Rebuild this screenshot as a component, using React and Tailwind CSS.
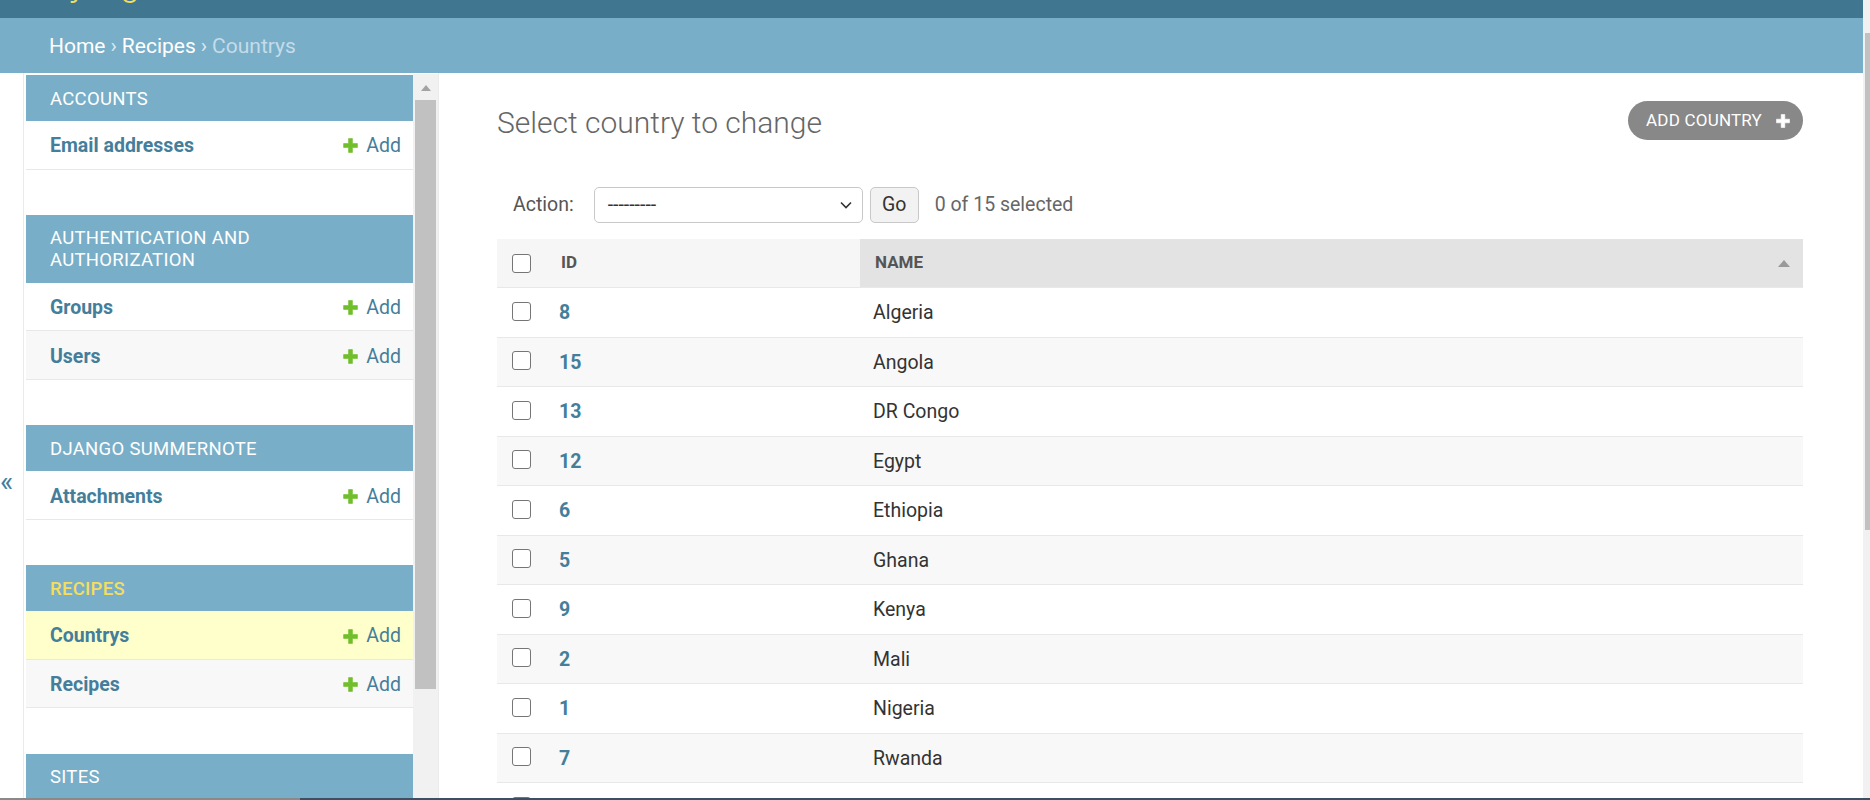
import React from "react";

const PlusIcon = ({ className, color }) => (
  <svg viewBox="0 0 16 16" className={className}>
    <path
      d="M6.2 1.5h3.6v4.7h4.7v3.6H9.8v4.7H6.2V9.8H1.5V6.2h4.7z"
      fill={color}
      stroke={color}
      strokeWidth="0.6"
      strokeLinejoin="round"
    />
  </svg>
);

const modules = [
  { name: ["ACCOUNTS"], rows: ["Email addresses"] },
  { name: ["AUTHENTICATION AND", "AUTHORIZATION"], rows: ["Groups", "Users"] },
  { name: ["DJANGO SUMMERNOTE"], rows: ["Attachments"] },
  { name: ["RECIPES"], rows: ["Countrys", "Recipes"], current: true, currentRow: 0 },
  { name: ["SITES"], rows: ["Sites"] },
];

const countries = [
  [8, "Algeria"],
  [15, "Angola"],
  [13, "DR Congo"],
  [12, "Egypt"],
  [6, "Ethiopia"],
  [5, "Ghana"],
  [9, "Kenya"],
  [2, "Mali"],
  [1, "Nigeria"],
  [7, "Rwanda"],
  [4, "Senegal"],
];

const Checkbox = () => (
  <div className="w-[19px] h-[19px] rounded-[3px] border-[1.5px] border-[#767676] bg-white shrink-0" />
);

function Sidebar() {
  return (
    <div className="flex shrink-0 h-full">
      <div className="w-[24px] border-r border-[#eaeaea] pt-[394px] text-[#447e9b] text-[28px] leading-[30px]">
        «
      </div>
      <div className="ml-[2px] w-[387px] pt-[2px] overflow-hidden h-full">
        {modules.map((m, i) => (
          <div key={i} className="mb-[45.3px]">
            <div
              className={
                "bg-[#79aec8] pl-[24px] pt-[1px] flex flex-col justify-center text-[18.5px] tracking-[0.3px] leading-[22px] " +
                (m.name.length > 1 ? "h-[68px] " : "h-[46px] ") +
                (m.current ? "text-[#f5dd5d] font-medium" : "text-white")
              }
            >
              {m.name.map((n, j) => (
                <span key={j}>{n}</span>
              ))}
            </div>
            {m.rows.map((r, j) => (
              <div
                key={j}
                className={
                  "h-[48.6px] border-b border-[#e8e8e8] flex items-center justify-between pl-[24px] pr-[12px] pt-[2px] " +
                  (m.current && m.currentRow === j
                    ? "bg-[#ffffcc]"
                    : j % 2 === 1
                    ? "bg-[#f8f8f8]"
                    : "bg-white")
                }
              >
                <span className="text-[19.5px] font-bold text-[#447e9b]">{r}</span>
                <span className="flex items-center gap-[7px] text-[19.5px] text-[#447e9b]">
                  <PlusIcon className="w-[17px] h-[17px]" color="#70bf2b" />
                  Add
                </span>
              </div>
            ))}
          </div>
        ))}
      </div>
      <div className="w-[26px] border-r border-[#eaeaea] h-full pt-[1px]">
        <div className="w-[25px] h-full bg-[#f1f1f1] flex flex-col items-center">
          <svg viewBox="0 0 10 6" className="w-[10px] h-[6px] mt-[11px]">
            <path d="M0 6 L5 0 L10 6 Z" fill="#a3a3a3" />
          </svg>
          <div className="w-[21px] h-[589px] bg-[#c1c1c1] mt-[9px]" />
        </div>
      </div>
    </div>
  );
}

function Main() {
  return (
    <div className="flex-1 min-w-0 pl-[58px] pr-[60px] pt-[28px] overflow-hidden h-full">
      <div className="flex justify-between items-start">
        <h1 className="mt-[4px] text-[30px] leading-[36px] font-light text-[#666]">
          Select country to change
        </h1>
        <div className="h-[39px] rounded-full bg-[#888] flex items-center pl-[18px] pr-[12px] gap-[13px] text-white text-[17px] tracking-[0.2px]">
          <span>ADD COUNTRY</span>
          <PlusIcon className="w-[16px] h-[16px]" color="#ffffff" />
        </div>
      </div>

      <div className="mt-[46px] h-[36px] flex items-center pl-[16px]">
        <span className="text-[19.5px] text-[#555]">Action:</span>
        <div className="ml-[20px] w-[269px] h-[36px] border border-[#c8c8c8] rounded-[5px] bg-white flex items-center justify-between pl-[13px] pr-[10px]">
          <span className="text-[19.5px] text-[#333]">---------</span>
          <svg viewBox="0 0 12 8" className="w-[12px] h-[8px]">
            <path d="M1 1.5 L6 6.5 L11 1.5" fill="none" stroke="#333" strokeWidth="1.6" />
          </svg>
        </div>
        <div className="ml-[7px] w-[49px] h-[36px] border border-[#c8c8c8] rounded-[5px] bg-[#f2f2f2] flex items-center justify-center text-[19.5px] text-[#333]">
          Go
        </div>
        <span className="ml-[16px] text-[19.5px] text-[#666]">0 of 15 selected</span>
      </div>

      <div className="mt-[15px]">
        <div className="h-[49px] flex pt-[1px]">
          <div className="w-[363px] bg-[#f6f6f6] flex items-center">
            <div className="w-[48px] pl-[15px]">
              <Checkbox />
            </div>
            <span className="pl-[16px] text-[17px] font-bold text-[#555]">ID</span>
          </div>
          <div className="flex-1 bg-[#e3e3e3] flex items-center justify-between pl-[15px] pr-[13px]">
            <span className="text-[17px] font-bold text-[#555]">NAME</span>
            <svg viewBox="0 0 12 7" className="w-[12px] h-[7px]">
              <path d="M0 7 L6 0 L12 7 Z" fill="#999" />
            </svg>
          </div>
        </div>
        {countries.map(([id, name], i) => (
          <div
            key={id}
            className={
              "h-[49.5px] border-t border-[#e8e8e8] flex items-center pt-[1px] " +
              (i % 2 === 1 ? "bg-[#f8f8f8]" : "bg-white")
            }
          >
            <div className="w-[48px] pl-[15px] -mt-[3px]">
              <Checkbox />
            </div>
            <div className="w-[315px] pl-[14px] text-[19.5px] font-bold text-[#447e9b]">{id}</div>
            <div className="flex-1 pl-[13px] text-[19.5px] text-[#333]">{name}</div>
          </div>
        ))}
      </div>
    </div>
  );
}

export default function App() {
  return (
    <div
      className="w-[1870px] h-[800px] overflow-hidden flex flex-col bg-white"
      style={{ fontFamily: "Roboto, 'Noto Sans', 'Liberation Sans', sans-serif" }}
    >
      <div className="flex-1 min-h-0 flex">
        <div className="flex-1 min-w-0 flex flex-col">
          <div className="h-[18px] shrink-0 bg-[#417690] overflow-hidden flex items-end pl-[49px]">
            <span className="text-[36px] leading-[36px] font-light text-[#f5dd5d] mb-[17px] whitespace-nowrap">
              Django administration
            </span>
          </div>
          <div className="h-[55px] shrink-0 bg-[#79aec8] flex items-center pl-[49px] pt-[3px] text-[21px] text-white whitespace-nowrap">
            <span>Home</span>
            <span className="mx-[5px] text-[#dbeaf2]">›</span>
            <span>Recipes</span>
            <span className="mx-[5px] text-[#dbeaf2]">›</span>
            <span className="text-[#c4dce8]">Countrys</span>
          </div>
          <div className="flex-1 min-h-0 flex">
            <Sidebar />
            <Main />
          </div>
        </div>
        <div className="w-[7px] shrink-0 bg-[#f1f1f1] pt-[33px] flex">
          <div className="ml-[2px] w-[5px] h-[497px] bg-[#c1c1c1]" />
        </div>
      </div>
      <div className="h-[2px] shrink-0 flex">
        <div className="w-[300px] bg-[#8a8a8a]" />
        <div className="flex-1 bg-[#3d4f63]" />
      </div>
    </div>
  );
}
